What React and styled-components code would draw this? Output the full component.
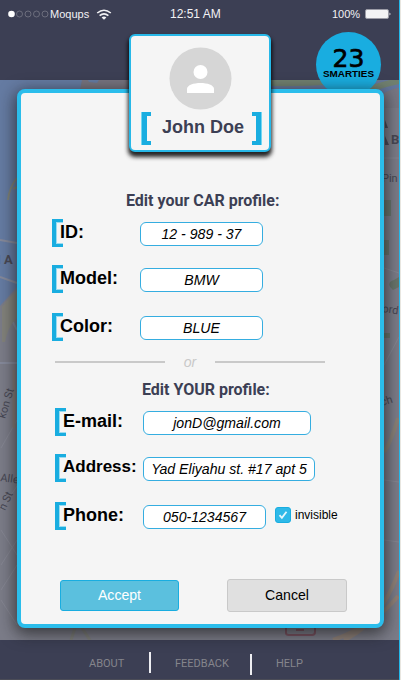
import React from "react";
import styled, { createGlobalStyle } from "styled-components";

const blue = "#19ade0";
const navy = "#3c3f54";

const Global = createGlobalStyle`
  * { box-sizing: border-box; }
  body { margin: 0; background: #e8e6e0; font-family: "Liberation Sans", Arial, sans-serif; overflow: hidden; }
`;

const Screen = styled.div`
  position: relative;
  display: grid;
  grid-template-rows: 80px 560px 40px;
  width: 400px;
  height: 680px;
  overflow: hidden;
  border-right: 1px solid #22b8ea;
  background: ${navy};
`;

const Header = styled.header`
  background: ${navy};
`;

const StatusBar = styled.div`
  display: grid;
  grid-template-columns: 155px 1fr 75px;
  align-items: center;
  height: 28px;
  padding: 0 8px;
  color: #f2f2f4;
  font-size: 11px;
  line-height: 14px;
`;

const Carrier = styled.div`
  display: flex;
  align-items: center;
`;

const Signal = styled.svg`
  display: block;
  width: 42px;
  height: 8px;
`;

const Wifi = styled.svg`
  display: block;
  width: 16px;
  height: 11px;
  margin-left: 7px;
`;

const Clock = styled.div`
  padding-left: 7px;
  font-size: 12px;
`;

const Battery = styled.div`
  display: flex;
  align-items: center;
  margin-left: 16px;
  gap: 5px;
`;

const BatteryIcon = styled.svg`
  display: block;
  flex: none;
  width: 26px;
  height: 10px;
`;

const MapSvg = styled.svg`
  display: block;
  width: 399px;
  height: 560px;
`;

const Footer = styled.footer`
  display: flex;
  align-items: flex-start;
  padding: 12px 0 0 89px;
  height: 40px;
  background: ${navy};
  color: #85858c;
  border-bottom: 1px solid #4b4c57;
  font: 11px/24px Roboto, sans-serif;
`;

const FooterLink = styled.span`
  width: ${(p) => p.$w}px;
  white-space: nowrap;
`;

const Bar = styled.i`
  width: 2px;
  height: 21px;
  margin-top: ${(p) => p.$top || 0}px;
  margin-right: ${(p) => p.$gap}px;
  background: #eeeef2;
`;

const Badge = styled.div`
  position: absolute;
  left: 316px;
  top: 32px;
  display: flex;
  flex-direction: column;
  align-items: center;
  width: 65px;
  height: 65px;
  padding-top: 16px;
  border-radius: 50%;
  background: ${blue};
  color: #000;
`;

const Score = styled.div`
  font: 25px/21px "DejaVu Sans", sans-serif;
  -webkit-text-stroke: 0.7px #000;
`;

const ScoreLabel = styled.div`
  font-size: 9.9px;
  line-height: 10px;
  font-weight: 700;
`;

const Dialog = styled.main`
  position: absolute;
  left: 17px;
  top: 89px;
  width: 367px;
  height: 539px;
  padding-top: 98px;
  border: 4px solid #2bbdeb;
  border-radius: 8px;
  background: #f5f5f5;
  box-shadow: 0 4px 16px 2px rgba(20, 20, 20, 0.65);
`;

const Title = styled.h2`
  margin: ${(p) => p.$top || 0}px 0 0 ${(p) => p.$left}px;
  height: 18px;
  color: ${navy};
  font: 700 16px/19px Roboto, sans-serif;
  white-space: nowrap;
`;

const Fields = styled.div`
  display: grid;
  grid-template-rows: 46px 48px 28px;
  padding-left: ${(p) => p.$left}px;
  margin-top: 10px;
`;

const Field = styled.div`
  display: flex;
  align-items: flex-start;
  height: 28px;
`;

const Bracket = styled.i`
  flex: none;
  width: 11px;
  height: 28px;
  border: solid ${blue};
  border-width: 3px 0 3px 4px;
  box-shadow: inset 1px 1px 0 #9bdcf0, inset 0 -1px 0 #9bdcf0;
`;

const Label = styled.label`
  position: relative;
  width: 80px;
  margin-left: -3px;
  font-size: ${(p) => p.$size || 18}px;
  font-weight: 700;
  line-height: 26px;
  white-space: nowrap;
  color: #000;
`;

const Input = styled.input`
  width: ${(p) => p.$w || 123}px;
  height: 24px;
  margin: 3px 0 0;
  padding: 0;
  border: 1px solid #35ade0;
  border-radius: 6px;
  background: #fff;
  color: #000;
  font: italic 14.1px "Liberation Sans", Arial, sans-serif;
  text-align: center;
  outline: none;
`;

const Divider = styled.div`
  display: flex;
  align-items: center;
  height: 20px;
  margin: 11px 0 0 34px;
  color: #c9c9c9;
`;

const Rule = styled.i`
  width: 110px;
  height: 2px;
  background: #c9c9c9;
`;

const Or = styled.span`
  width: 50px;
  text-align: center;
  font: italic 14.1px/18px "Liberation Sans", Arial, sans-serif;
`;

const Toggle = styled.div`
  display: flex;
  align-items: center;
  gap: 4px;
  margin: 5px 0 0 9px;
  font-size: 12px;
  line-height: 16px;
  color: #000;
`;

const CheckBox = styled.svg`
  display: block;
  width: 16px;
  height: 16px;
`;

const Actions = styled.div`
  display: flex;
  align-items: center;
  justify-content: space-between;
  margin: 49px 33px 0 39px;
`;

const Button = styled.button`
  width: ${(p) => (p.$primary ? 119 : 120)}px;
  height: ${(p) => (p.$primary ? 31 : 33)}px;
  padding: 0 0 2px;
  border: 1px solid ${(p) => (p.$primary ? blue : "#c9c9c9")};
  border-radius: 3px;
  background: ${(p) => (p.$primary ? "#5bc0de" : "#e0e0e0")};
  color: ${(p) => (p.$primary ? "#fff" : "#000")};
  font: 14.1px "Liberation Sans", Arial, sans-serif;
`;

const Card = styled.section`
  position: absolute;
  left: 129px;
  top: 34px;
  display: flex;
  flex-direction: column;
  align-items: center;
  width: 142px;
  height: 118px;
  padding-top: 11px;
  border: 2px solid #27b8e8;
  border-radius: 6px;
  background: #f5f5f5;
  box-shadow: 0 4px 4px 1px rgba(0, 0, 0, 0.85);
`;

const Avatar = styled.svg`
  display: block;
  width: 63px;
  height: 63px;
`;

const NameRow = styled.div`
  display: flex;
  align-items: flex-start;
  justify-content: space-between;
  width: 120px;
  margin: 2px 0 0 3px;
`;

const NameBracket = styled.i`
  width: 9px;
  height: 33px;
  border: solid ${blue};
  border-width: ${(p) => (p.$right ? "4px 5px 4px 0" : "4px 0 4px 5px")};
  box-shadow: ${(p) => (p.$right ? "1px" : "-1px")} 0 0 #72d6f2;
`;

const Name = styled.h1`
  margin: 0 0 0 3px;
  color: ${navy};
  font-size: 18px;
  line-height: 30px;
  white-space: nowrap;
`;

function MapView() {
  return (
    <MapSvg viewBox="0 80 399 560" aria-hidden="true">
      <rect y="80" width="399" height="560" fill="#7b7c88" />
      <path d="M0 80H86L80 93 17 287 0 306Z" fill="#657ba2" />
      <path d="M82 80h47v10H80Z" fill="#77747f" />
      <path d="M88 80h11l-2 3-8-1Z" fill="#657ba2" />
      <path d="M271 85Q330 76 399 80V97H271Z" fill="#66779b" />
      <path d="M271 80h112q-55 7-112 6Z" fill="#718070" />
      <path d="M370 89q14-5 29-8" fill="none" stroke="#718070" strokeWidth="6" />
      <path d="M384 93q10-5 15-5v20h-15z" fill="#777783" />
      <path d="M0 240 17 243M0 277 17 283M6 309 17 330M0 363h17" fill="none" stroke="#85899a" strokeWidth="2" />
      <path d="M2 307Q9 297 17 290V318Q8 326 5 342H2Z" fill="#82827b" />
      <path d="M8 200Q9 188 17 178M13 189l4-2" fill="none" stroke="#7e8277" strokeWidth="2" />
      <path d="M1 448 17 420M1 510 17 486M1 530l16 25M1 565l16-25M1 590l16-25M1 600l16 25M384 158h15M384 268l15 5M384 365l15-28M384 480l15 2M384 540l15 2" fill="none" stroke="#858692" strokeWidth="1" />
      <path d="M14 370v58" stroke="#857d79" strokeWidth="3" />
      <path d="M384 200h7v16h-7zM384 240h5v15h-5zM394 280q-9 3-1 10l6-3v-10zM384 333h6v5h-6z" fill="#68756b" />
      <path d="M398 418q-7 24-14 34" fill="none" stroke="#888078" strokeWidth="4" />
      <path d="M344 640q35-15 55-69M333 640q42-15 65-44" fill="none" stroke="#8e8078" strokeWidth="4" />
      <g fill="#484854" fontFamily="Roboto" fontSize="11">
        <text x="-3" y="264" fontWeight="700" fontSize="13">I A</text>
        <text x="391" y="144" fontWeight="700" fontSize="13">B</text>
        <text x="382" y="182">Pin</text>
        <text x="382" y="312" transform="rotate(8 382 312)">ord</text>
        <text x="382" y="406" transform="rotate(-18 382 406)">ch</text>
        <text transform="translate(5 419) rotate(-73)">kon St</text>
        <text transform="translate(0 481) rotate(8)">Alle</text>
        <text transform="translate(5 511) rotate(-65)">n St</text>
        <path d="m385 120 3 8h-3zM385 136l4 9h-4z" />
      </g>
      <path d="M71 640l4-12M82 628l8 12" fill="none" stroke="#7c7d79" strokeWidth="3" />
      <path d="M286 628v5q0 2 3 2h23q3 0 3-3v-4M296 630h8" fill="none" stroke="#79505f" strokeWidth="2" />
    </MapSvg>
  );
}

function Row({ label, value, width, size, children }) {
  return (
    <Field>
      <Bracket />
      <Label $size={size}>{label}</Label>
      <Input aria-label={label} $w={width} defaultValue={value} />
      {children}
    </Field>
  );
}

export default function App() {
  return (
    <>
      <Global />
      <Screen>
        <Header>
          <StatusBar>
            <Carrier>
              <Signal viewBox="0 0 42 8">
                <circle cx="3.5" cy="4" r="3.3" fill="#fff" />
                {[11.5, 20, 28.5, 37].map((x) => (
                  <circle key={x} cx={x} cy="4" r="3" fill="none" stroke="#777987" strokeWidth="0.8" />
                ))}
              </Signal>
              Moqups
              <Wifi viewBox="0 0 16 11">
                <path d="M1.2 4Q8-1.5 14.8 4M3.6 6.6Q8 3 12.4 6.6" fill="none" stroke="#f2f2f4" strokeWidth="1.6" />
                <path d="M5.6 8.4Q8 6.6 10.4 8.4L8 10.7Z" fill="#f2f2f4" />
              </Wifi>
            </Carrier>
            <Clock>12:51 AM</Clock>
            <Battery>
              100%
              <BatteryIcon viewBox="0 0 26 10">
                <rect x=".5" y=".5" width="23" height="9" rx="1.5" fill="#f3f3f5" stroke="#9b9ba6" />
                <path d="M24.5 3.5q2 1.5 0 3Z" fill="#f3f3f5" />
              </BatteryIcon>
            </Battery>
          </StatusBar>
        </Header>
        <MapView />
        <Footer>
          <FooterLink $w={60}>ABOUT</FooterLink>
          <Bar $gap={24} />
          <FooterLink $w={75}>FEEDBACK</FooterLink>
          <Bar $gap={24} $top={2} />
          <FooterLink $w={40}>HELP</FooterLink>
        </Footer>
        <Badge>
          <Score>23</Score>
          <ScoreLabel>SMARTIES</ScoreLabel>
        </Badge>
        <Dialog>
          <Title $left={105}>Edit your CAR profile:</Title>
          <Fields $left={31}>
            <Row label="ID:" value="12 - 989 - 37" />
            <Row label="Model:" value="BMW" />
            <Row label="Color:" value="BLUE" />
          </Fields>
          <Divider>
            <Rule />
            <Or>or</Or>
            <Rule />
          </Divider>
          <Title $left={121} $top={8}>Edit YOUR profile:</Title>
          <Fields $left={34}>
            <Row label="E-mail:" value="jonD@gmail.com" width={168} />
            <Row label="Address:" value="Yad Eliyahu st. #17 apt 5" width={172} size={17} />
            <Row label="Phone:" value="050-1234567">
              <Toggle>
                <CheckBox viewBox="0 0 16 16">
                  <rect x=".5" y=".5" width="15" height="15" rx="2.5" fill="#2fb9e8" stroke={blue} />
                  <path d="m4.5 8.2 2.4 2.7 4.6-6.2" fill="none" stroke="#e5f7fd" strokeWidth="1.8" />
                </CheckBox>
                invisible
              </Toggle>
            </Row>
          </Fields>
          <Actions>
            <Button $primary>Accept</Button>
            <Button>Cancel</Button>
          </Actions>
        </Dialog>
        <Card>
          <Avatar viewBox="0 0 63 63">
            <circle cx="31.5" cy="31.5" r="31" fill="#d6d6d6" />
            <circle cx="31.5" cy="25" r="7" fill="#fff" />
            <path d="M18 46v-4c0-8 27-8 27 0v4Z" fill="#fff" />
          </Avatar>
          <NameRow>
            <NameBracket />
            <Name>John Doe</Name>
            <NameBracket $right />
          </NameRow>
        </Card>
      </Screen>
    </>
  );
}
